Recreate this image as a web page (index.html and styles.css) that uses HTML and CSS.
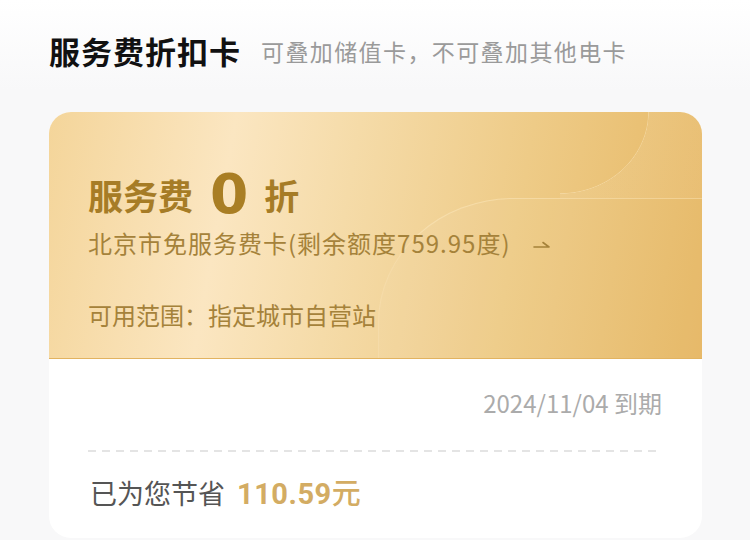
FILE: index.html
```html
<!DOCTYPE html>
<html lang="zh-CN">
<head>
    <meta charset="UTF-8">
    <meta name="viewport" content="width=device-width, initial-scale=1.0">
    <title>服务费折扣卡</title>
    <link rel="stylesheet" href="styles.css">
</head>
<body>
    <div class="page">
        <div class="header">
            <h2>服务费折扣卡</h2>
            <span class="tip">可叠加储值卡，不可叠加其他电卡</span>
        </div>

        <div class="card">
            <div class="card-top">
                <div class="deco-corner"></div>
                <div class="deco-wave"></div>

                <div class="discount">
                    <span>服务费</span>
                    <span class="num">0</span>
                    <span>折</span>
                </div>
                <div class="card-name">
                    北京市免服务费卡(剩余额度759.95度)
                    <svg class="arrow" width="18" height="10" viewBox="0 0 18 10">
                        <path d="M1 8 H16 L10 3.5" fill="none" stroke="#a5823a" stroke-width="1.6" stroke-linecap="round" stroke-linejoin="round"/>
                    </svg>
                </div>
                <div class="scope">可用范围：指定城市自营站</div>
            </div>

            <div class="card-bottom">
                <div class="expire">2024/11/04 到期</div>
                <div class="divider"></div>
                <div class="saved">已为您节省 <span class="money">110.59</span><span class="unit">元</span></div>
            </div>
        </div>
    </div>
</body>
</html>
```

FILE: styles.css
```css
* {
    margin: 0;
    padding: 0;
    box-sizing: border-box;
}

body {
    font-family: "Noto Sans CJK SC", "Noto Sans", sans-serif;
    background: linear-gradient(180deg, #ffffff 0%, #f8f8f9 90px, #f8f8f9 100%);
    width: 750px;
    height: 540px;
    overflow: hidden;
}

.page {
    padding: 28px 48px 0 49px;
}

/* Header */
.header {
    display: flex;
    align-items: center;
    gap: 20px;
    height: 44px;
}

.header h2 {
    font-size: 31px;
    font-weight: 700;
    color: #111;
    letter-spacing: 1px;
}

.tip {
    font-size: 23px;
    color: #9a9a9a;
    letter-spacing: 1.4px;
    margin-top: 2px;
}

/* Card */
.card {
    margin-top: 40px;
    background: #fff;
    border-radius: 22px;
    overflow: hidden;
}

.card-top {
    position: relative;
    height: 247px;
    padding: 55px 39px 0;
    background: linear-gradient(100deg, #f4d59a 0%, #fbe6c1 27%, #f5dba8 45%, #eecb87 70%, #e6b763 100%);
    border-bottom: 1px solid #e2b360;
    overflow: hidden;
}

/* decorative curves */
.deco-corner {
    position: absolute;
    top: 0;
    right: 0;
    width: 142px;
    height: 86px;
    background: radial-gradient(ellipse 89px 82px at 0 0, transparent 98.5%, rgba(255, 240, 210, 0.4) 99.5%, rgba(255, 255, 255, 0.08) 100%);
}

.deco-wave {
    position: absolute;
    left: 329px;
    top: 86px;
    width: 420px;
    height: 300px;
    border-top-left-radius: 135px 125px;
    border-top: 1px solid rgba(255, 238, 200, 0.4);
    border-left: 1px solid rgba(255, 238, 200, 0.2);
    background: rgba(255, 255, 255, 0.04);
}

.discount {
    position: relative;
    display: flex;
    align-items: center;
    height: 54px;
    color: #a67c26;
    font-size: 35px;
    font-weight: 700;
}

.discount .num {
    font-family: "DejaVu Sans", sans-serif;
    font-size: 55px;
    font-weight: 700;
    color: #a97e24;
    line-height: 1;
    margin: 0 16px 0 17px;
}

.card-name {
    position: relative;
    display: flex;
    align-items: center;
    margin-top: 4px;
    font-size: 24px;
    color: #a5823a;
    letter-spacing: 1px;
}

.arrow {
    margin-left: 22px;
    margin-top: 3px;
}

.scope {
    position: relative;
    margin-top: 37px;
    font-size: 24px;
    color: #a5823a;
}

/* Bottom */
.card-bottom {
    height: 179px;
    padding: 28px 40px 0 39px;
}

.expire {
    text-align: right;
    font-size: 24px;
    color: #ababab;
    line-height: 32px;
}

.divider {
    margin-top: 31px;
    height: 2px;
    background: repeating-linear-gradient(90deg, #e4e4e4 0 8px, transparent 8px 14px);
}

.saved {
    margin-top: 20px;
    font-size: 27px;
    color: #555;
    line-height: 38px;
    padding-left: 2px;
}

.money {
    font-family: "Roboto", "Noto Sans", sans-serif;
    font-size: 29px;
    font-weight: 700;
    color: #d3ac63;
    margin-left: 6px;
    letter-spacing: 0.5px;
}

.unit {
    color: #d3ac63;
    font-weight: 500;
    font-size: 29px;
}
```
